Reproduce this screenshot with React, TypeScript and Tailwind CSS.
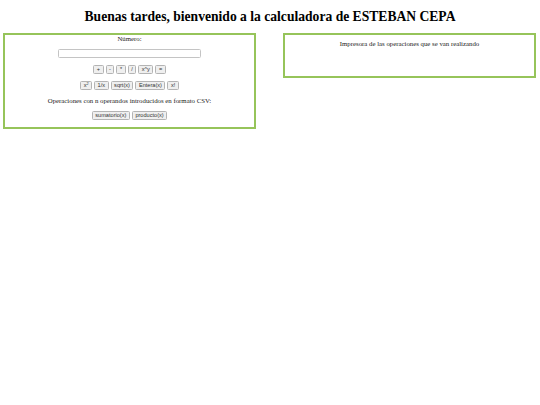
import React from 'react';

const Btn: React.FC<{ children: React.ReactNode }> = ({ children }) => (
  <button className="h-[9px] px-[2.5px] rounded-[1.5px] border border-[#b4b4b4] bg-[#efefef] text-[5.6px] leading-none text-[#333] font-['Liberation_Sans',Arial,sans-serif]">
    {children}
  </button>
);

const App: React.FC = () => {
  return (
    <div className="w-[540px] h-[405px] bg-white font-['Liberation_Serif','Times_New_Roman',serif] text-black">
      <h1 className="pt-[9px] h-[33px] text-center text-[13.6px] font-bold leading-[15px]">
        Buenas tardes, bienvenido a la calculadora de ESTEBAN CEPA
      </h1>

      <div className="flex items-start gap-[27px] pl-[3px]">
        {/* Calculadora */}
        <div className="w-[253px] h-[96px] border-2 border-[#96c45a] flex flex-col items-center">
          <p className="text-[6.8px] leading-[8px] text-[#222]">Número:</p>
          <input className="mt-[6px] w-[143px] h-[9px] border border-[#c4c4c4] rounded-[1.5px] bg-white" />
          <div className="mt-[7px] flex gap-[2px]">
            <Btn>+</Btn>
            <Btn>-</Btn>
            <Btn>*</Btn>
            <Btn>/</Btn>
            <Btn>x^y</Btn>
            <Btn>=</Btn>
          </div>
          <div className="mt-[7px] flex gap-[2px]">
            <Btn>
              x<sup className="text-[3.8px]">2</sup>
            </Btn>
            <Btn>1/x</Btn>
            <Btn>sqrt(x)</Btn>
            <Btn>Entera(x)</Btn>
            <Btn>x!</Btn>
          </div>
          <p className="mt-[7px] text-[6.8px] leading-[8px] text-[#222]">
            Operaciones con n operandos introducidos en formato CSV:
          </p>
          <div className="mt-[6px] flex gap-[2px]">
            <Btn>sumatorio(x)</Btn>
            <Btn>producto(x)</Btn>
          </div>
        </div>

        {/* Impresora */}
        <div className="w-[253px] h-[45px] border-2 border-[#96c45a] flex flex-col items-center">
          <p className="mt-[5px] text-[6.8px] leading-[8px] text-[#222]">
            Impresora de las operaciones que se van realizando
          </p>
        </div>
      </div>
    </div>
  );
};

export default App;
